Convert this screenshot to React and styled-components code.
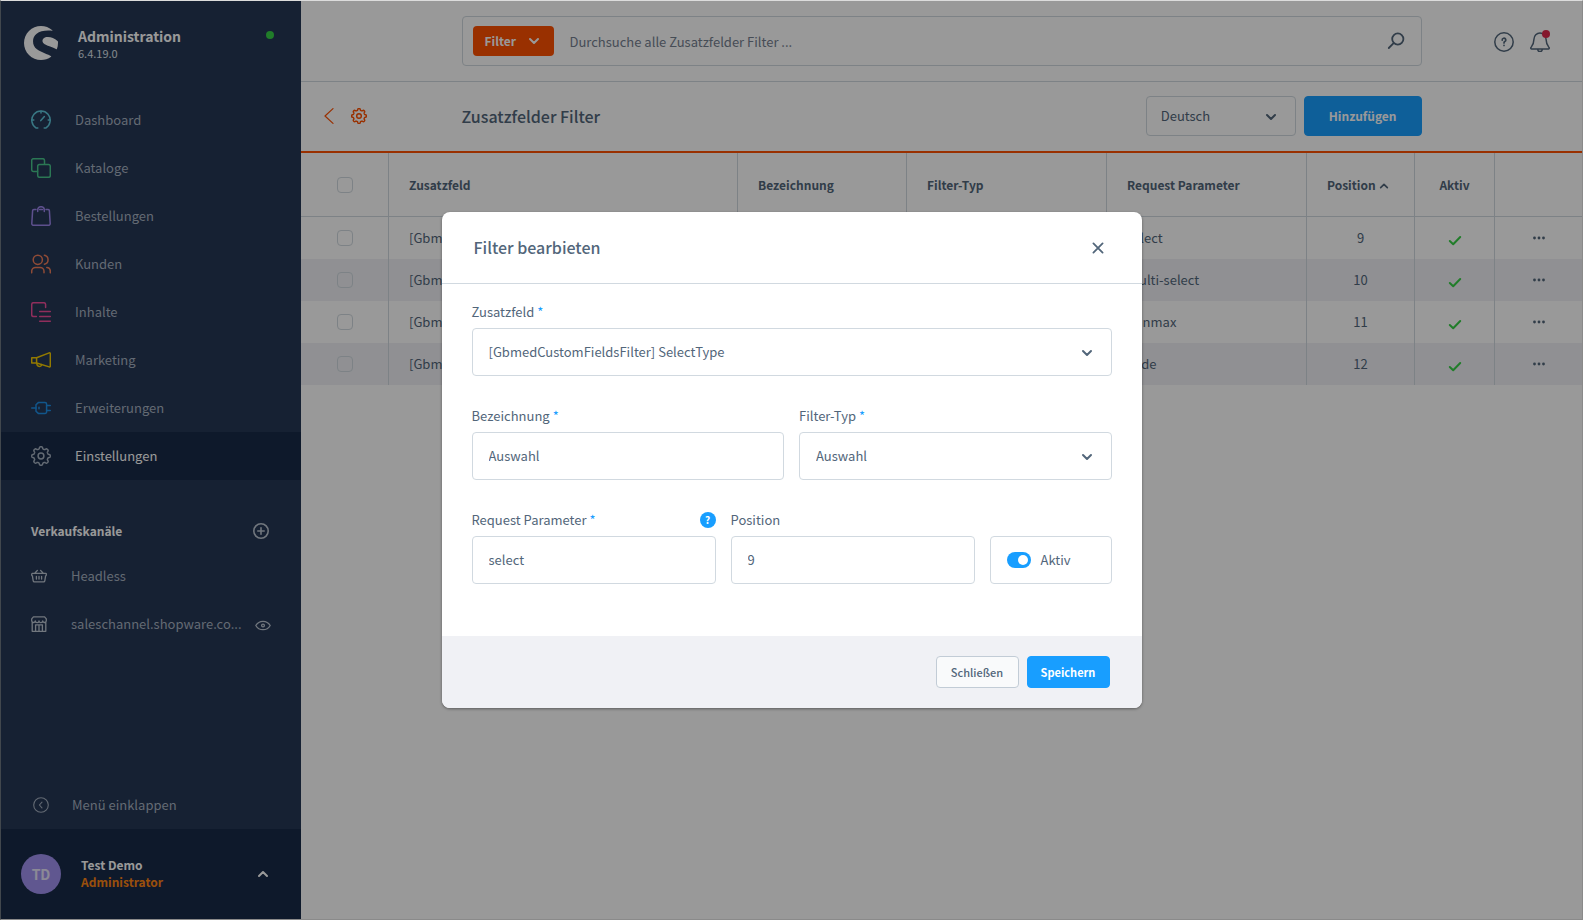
import React from "react"
import styled, { createGlobalStyle } from "styled-components"
import { SiShopware } from "react-icons/si"

const GlobalStyle = createGlobalStyle`
    *, *::before, *::after {
        box-sizing: border-box;
    }

    body {
        margin: 0;
        background: #fff;
    }

    body, button, input, select {
        font-family: "Noto Sans CJK SC", "Open Sans", sans-serif;
        font-size: 13px;
        line-height: 20px;
        color: #52667a;
    }

    button, input, select {
        margin: 0;
    }
`

const Window = styled.div`
    position: relative;
    display: flex;
    min-height: 100vh;
    border: 1px solid #8a8a8a;
    border-top-color: #dcdcdc;
    border-left-color: #41474d;
`

/* ---------- sidebar ---------- */

const Sidebar = styled.aside`
    flex: none;
    display: flex;
    flex-direction: column;
    width: 300px;
    background: #263755;
    color: #a5b1c0;
`

const Brand = styled.header`
    display: flex;
    align-items: flex-start;
    padding: 25px 27px 36px 23px;
`

const BrandText = styled.div`
    flex: 1;
    margin-left: 20px;
    color: #fff;

    strong {
        display: block;
        font-size: 14px;
    }

    span {
        display: block;
        font-size: 11px;
        line-height: 14px;
        color: #dde3ea;
    }
`

const OnlineDot = styled.span`
    width: 8px;
    height: 8px;
    margin-top: 5px;
    border-radius: 50%;
    background: #37d046;
`

const NavLink = styled.a`
    display: flex;
    align-items: center;
    gap: 24px;
    height: 48px;
    padding: 0 28px 0 30px;
    color: ${p => (p.$active ? "#fff" : "#a5b1c0")};
    background: ${p => (p.$active ? "#182a48" : "transparent")};
    text-decoration: none;

    svg {
        flex: none;
        color: ${p => p.$tint};
    }
`

const ChannelHead = styled.div`
    display: flex;
    align-items: center;
    justify-content: space-between;
    height: 42px;
    margin-top: 30px;
    padding: 0 32px 0 30px;
    color: #fff;
`

const SectionTitle = styled.h2`
    margin: 0;
    font-size: 12px;
    font-weight: 700;
`

const IconButton = styled.button`
    display: inline-flex;
    padding: 0;
    border: 0;
    background: none;
    color: ${p => p.$tint || "#52667a"};
    cursor: pointer;
`

const ChannelName = styled.span`
    flex: 1;
    white-space: nowrap;
`

const ChannelLink = styled(NavLink)`
    padding-right: 30px;

    svg:last-child:not(:first-child) {
        margin-left: -12px;
    }
`

const Collapse = styled.button`
    display: flex;
    align-items: center;
    gap: 23px;
    height: 48px;
    margin-top: auto;
    padding: 0 32px;
    border: 0;
    background: none;
    color: #a5b1c0;
    cursor: pointer;
`

const User = styled.button`
    display: flex;
    align-items: center;
    height: 90px;
    padding: 0 32px 0 20px;
    border: 0;
    background: #182a48;
    color: #fff;
    text-align: left;
    cursor: pointer;
`

const Avatar = styled.span`
    width: 40px;
    height: 40px;
    border-radius: 50%;
    background: #a092f0;
    color: #e8e4fb;
    font-size: 14px;
    font-weight: 700;
    line-height: 40px;
    text-align: center;
`

const UserText = styled.span`
    flex: 1;
    margin-left: 20px;
    padding-bottom: 2px;
    font-weight: 700;
    font-size: 12px;
    line-height: 17px;

    span {
        display: block;
    }

    span + span {
        color: #ff8514;
    }
`

/* ---------- page ---------- */

const Page = styled.main`
    flex: 1;
    min-width: 0;
`

const Bar = styled.div`
    display: grid;
    grid-template-columns: 1fr minmax(0, 960px) 1fr;
    align-items: center;
`

const TopBar = styled(Bar)`
    height: 81px;
    border-bottom: 1px solid #d1d9e0;
`

const TitleBar = styled(Bar)`
    height: 71px;
    padding-bottom: 2px;
    border-bottom: 2px solid #ff5000;
`

const Search = styled.form`
    grid-column: 2;
    display: flex;
    align-items: center;
    height: 50px;
    padding: 0 16px 0 10px;
    border: 1px solid #d1d9e0;
    border-radius: 4px;

    input {
        flex: 1;
        height: 30px;
        margin-left: 12px;
        padding: 0 4px;
        border: 0;
        outline: 0;
        background: none;

        &::placeholder {
            color: #758090;
            opacity: 1;
        }
    }
`

const FilterButton = styled.button`
    display: flex;
    align-items: center;
    justify-content: space-between;
    width: 81px;
    height: 30px;
    padding: 0 14px 0 12px;
    border: 0;
    border-radius: 4px;
    background: #ff5000;
    color: #fff;
    font-size: 12px;
    font-weight: 700;
`

const TopActions = styled.div`
    display: flex;
    justify-content: flex-end;
    gap: 16px;
    padding: 2px 32px 0 0;
`

const Bell = styled(IconButton)`
    position: relative;

    &::after {
        content: "";
        position: absolute;
        top: -2px;
        right: 0;
        width: 8px;
        height: 8px;
        border-radius: 50%;
        background: #de294c;
    }
`

const BackLinks = styled.div`
    display: flex;
    align-items: center;
    gap: 14px;
    padding-left: 20px;

    a {
        display: flex;
        color: #ff5000;
    }
`

const PageHead = styled.div`
    display: flex;
    align-items: center;
    gap: 8px;
`

const Title = styled.h1`
    flex: 1;
    margin: 0;
    font-size: 16px;
    font-weight: 500;
`

const SelectBox = styled.div`
    position: relative;
    width: ${p => p.$width || "100%"};

    select {
        appearance: none;
        display: block;
        width: 100%;
        height: ${p => p.$height || "48px"};
        padding: 0 40px 0 ${p => p.$inset || "16px"};
        border: 1px solid #d1d9e0;
        border-radius: 4px;
        background: none;
    }

    svg {
        position: absolute;
        top: 50%;
        right: 19px;
        margin-top: -5px;
        pointer-events: none;
    }
`

const PrimaryButton = styled.button`
    height: ${p => (p.$small ? "32px" : "40px")};
    min-width: 83px;
    padding: ${p => (p.$small ? "0 12px" : "0 24px")};
    border: 1px solid #189eff;
    border-radius: 4px;
    background: #189eff;
    color: #fff;
    font-size: ${p => (p.$small ? "11px" : "12px")};
    font-weight: 700;
`

const PlainButton = styled(PrimaryButton)`
    border-color: #c2ccd6;
    background: #f9fafb;
    color: #52667a;
    font-weight: 500;
`

/* ---------- data table ---------- */

const Grid = styled.table`
    width: 100%;
    border-collapse: separate;
    border-spacing: 0;
    table-layout: fixed;

    th, td {
        padding: 0 20px;
        border-right: 1px solid #d1d9e0;
        text-align: left;
        white-space: nowrap;
        overflow: hidden;
    }

    th:last-child, td:last-child {
        border-right: 0;
    }

    th {
        height: 64px;
        border-bottom: 1px solid #d1d9e0;
        font-weight: 700;
        font-size: 12px;
    }

    td {
        height: 42px;
    }

    tbody tr:nth-child(even) td {
        background: #f0f1f5;
    }

    .center {
        padding: 0;
        text-align: center;
    }

    th svg {
        margin-left: 1px;
        vertical-align: -1px;
    }
`

const ActiveMark = styled.span`
    display: flex;
    justify-content: center;
    padding-top: 3px;
    color: #37d046;
`

const RowMenu = styled(IconButton)`
    display: flex;
    margin: 0 auto;
`

const Check = styled.input`
    appearance: none;
    display: block;
    width: 16px;
    height: 16px;
    margin: 0 auto;
    border: 1px solid #d1d9e0;
    border-radius: 4px;
`

/* ---------- modal ---------- */

const Overlay = styled.div`
    position: absolute;
    inset: 0;
    display: flex;
    align-items: center;
    justify-content: center;
    background: rgba(0, 0, 0, 0.4);
`

const Modal = styled.section`
    width: 700px;
    max-width: 100%;
    border-radius: 8px;
    background: #fff;
    box-shadow: 0 1px 3px rgba(0, 0, 0, 0.4);
    overflow: hidden;
`

const ModalHead = styled.header`
    display: flex;
    align-items: center;
    justify-content: space-between;
    height: 72px;
    padding: 0 36px 0 32px;
    border-bottom: 1px solid #d1d9e0;

    h2 {
        margin: 0;
        padding-bottom: 2px;
        font-size: 16px;
        font-weight: 500;
    }
`

const ModalBody = styled.div`
    padding: 20px 30px;
`

const FieldRow = styled.div`
    display: grid;
    grid-template-columns: ${p => p.$columns || "1fr"};
    align-items: end;
    gap: 15px;
    margin-bottom: 32px;
`

const FieldLabel = styled.div`
    display: flex;
    align-items: center;
    justify-content: space-between;
    height: 16px;
    margin-bottom: 8px;

    sup {
        margin-left: 3px;
        line-height: 0;
        font-size: 13px;
        vertical-align: 0;
        color: #189eff;
    }
`

const TextInput = styled.input`
    display: block;
    width: 100%;
    height: 48px;
    padding: 0 16px 2px;
    border: 1px solid #d1d9e0;
    border-radius: 4px;
    outline: 0;
`

const SwitchField = styled.label`
    display: flex;
    align-items: center;
    gap: 10px;
    height: 48px;
    padding: 0 16px;
    border: 1px solid #d1d9e0;
    border-radius: 4px;

    input {
        appearance: none;
        width: 24px;
        height: 16px;
        padding: 3px;
        border-radius: 8px;
        background: #d1d9e0;
    }

    input::before {
        content: "";
        display: block;
        width: 10px;
        height: 10px;
        border-radius: 50%;
        background: #fff;
    }

    input:checked {
        background: #189eff;
    }

    input:checked::before {
        margin-left: 8px;
    }
`

const HelpBadge = styled.button`
    width: 16px;
    height: 16px;
    padding: 0;
    border: 0;
    border-radius: 50%;
    background: #189eff;
    color: #fff;
    font-size: 10px;
    font-weight: 700;
    line-height: 16px;
`

const ModalFoot = styled.footer`
    display: flex;
    align-items: center;
    justify-content: flex-end;
    gap: 8px;
    height: 72px;
    padding: 0 32px;
    background: #f0f1f5;
`

/* ---------- icons ---------- */

const Icon = ({ size = 20, box = 20, width = 1.5, children }) => (
    <svg
        width={size}
        height={size}
        viewBox={`0 0 ${box} ${box}`}
        fill="none"
        stroke="currentColor"
        strokeWidth={width}
        strokeLinecap="round"
        strokeLinejoin="round"
        aria-hidden="true"
    >
        {children}
    </svg>
)

// eight rounded teeth around the hub, one of them pointing straight up
const gearPath = () => {
    const points = []
    for (let i = 0; i < 160; i++) {
        const angle = (i / 160) * Math.PI * 2
        const radius = 8.2 + 1.05 * Math.tanh(2.2 * Math.cos(8 * angle))
        points.push(`${(10 + radius * Math.sin(angle)).toFixed(2)} ${(10 - radius * Math.cos(angle)).toFixed(2)}`)
    }
    return `M${points.join(" L")} Z`
}

const GEAR = gearPath()

const Gear = ({ size, width }) => (
    <Icon size={size} width={width}>
        <path d={GEAR} />
        <circle cx="10" cy="10" r="2.9" />
    </Icon>
)

const Chevron = ({ up, size = 12, width = 2 }) => (
    <Icon size={size} box={12} width={width}>
        <path d={up ? "M2 8 L6 4 L10 8" : "M2 4 L6 8 L10 4"} />
    </Icon>
)

const navItems = [
    {
        label: "Dashboard",
        tint: "#5fc8dd",
        icon: (
            <Icon>
                <path d="M6.8 18.1 H5.2 A9.2 9.2 0 1 1 14.8 18.1 H13.2" />
                <path d="M10 1.2 V3 M.8 10 H2.8 M17.2 10 H19.2 M9.8 10.6 L13.4 6.6" />
            </Icon>
        ),
    },
    {
        label: "Kataloge",
        tint: "#48c78d",
        icon: (
            <Icon>
                <path d="M6.5 13.5 H2.5 A1.8 1.8 0 0 1 .7 11.7 V2.5 A1.8 1.8 0 0 1 2.5 .7 H11.7 A1.8 1.8 0 0 1 13.5 2.5 V6.3" />
                <rect x="6.7" y="6.5" width="12.6" height="12.8" rx="1.8" />
            </Icon>
        ),
    },
    {
        label: "Bestellungen",
        tint: "#9c86ec",
        icon: (
            <Icon>
                <path d="M5 3.6 H2.9 A1.3 1.3 0 0 0 1.6 4.9 L.8 17.6 A1.6 1.6 0 0 0 2.4 19.3 H17.6 A1.6 1.6 0 0 0 19.2 17.6 L18.4 4.9 A1.3 1.3 0 0 0 17.1 3.6 H15 M8.5 3.6 H11.5" />
                <path d="M6.7 5.4 V3.8 A3.3 3.1 0 0 1 13.3 3.8 V5.4" />
            </Icon>
        ),
    },
    {
        label: "Kunden",
        tint: "#ef7d5a",
        icon: (
            <Icon>
                <circle cx="6.8" cy="5.8" r="4.6" />
                <path d="M13.4 1.2 A4.6 4.6 0 0 1 13.4 10.2 M.7 18.8 V17.2 A3.8 3.8 0 0 1 4.5 13.4 H9.2 A3.8 3.8 0 0 1 13 17.2 V18.8 M15.8 13.4 A3.8 3.8 0 0 1 19.3 17.2 V18.8" />
            </Icon>
        ),
    },
    {
        label: "Inhalte",
        tint: "#f04e9a",
        icon: (
            <Icon>
                <path d="M5.4 14.6 H2.6 A1.9 1.9 0 0 1 .7 12.7 V2.6 A1.9 1.9 0 0 1 2.6 .7 H12.7 A1.9 1.9 0 0 1 14.6 2.6 V5.6" />
                <path d="M8.7 9.4 H19.3 M8.7 14.4 H19.3 M8.7 19.2 H19.3" />
            </Icon>
        ),
    },
    {
        label: "Marketing",
        tint: "#f5cc00",
        icon: (
            <Icon>
                <path d="M.7 7.8 H5.6 L18.2 2.9 A.8 .8 0 0 1 19.3 3.6 V16.2 A.8 .8 0 0 1 18.2 16.9 L5.6 13 H.7 Z M5.6 7.8 V13 M6 13.2 A2.5 2.5 0 1 0 10.8 14.6" />
            </Icon>
        ),
    },
    {
        label: "Erweiterungen",
        tint: "#1d8fe8",
        icon: (
            <Icon>
                <path d="M.7 10 H5 M15.6 7.5 H19.3 M15.6 12.5 H19.3 M8 9.2 V10.8" />
                <path d="M7.3 4.6 H14 A1.6 1.6 0 0 1 15.6 6.2 V13.8 A1.6 1.6 0 0 1 14 15.4 H7.3 L5 13.2 V6.8 Z" />
            </Icon>
        ),
    },
    { label: "Einstellungen", tint: "#a5b1c0", icon: <Gear />, active: true },
]

const rows = [
    { field: "[GbmedCustomFieldsFilter] SelectType", name: "Auswahl", type: "Auswahl", param: "select", position: 9 },
    { field: "[GbmedCustomFieldsFilter] MultiSelect", name: "Mehrfachauswahl", type: "Mehrfachauswahl", param: "multi-select", position: 10 },
    { field: "[GbmedCustomFieldsFilter] MinMax", name: "Min / Max", type: "Min / Max", param: "minmax", position: 11 },
    { field: "[GbmedCustomFieldsFilter] Code", name: "Code", type: "Auswahl", param: "code", position: 12 },
]

const Menu = () => (
    <Sidebar>
        <Brand>
            <SiShopware size={34} color="#fff" aria-hidden="true" />
            <BrandText>
                <strong>Administration</strong>
                <span>6.4.19.0</span>
            </BrandText>
            <OnlineDot />
        </Brand>
        <nav>
            {navItems.map(item => (
                <NavLink key={item.label} href="#" $tint={item.tint} $active={item.active}>
                    {item.icon}
                    {item.label}
                </NavLink>
            ))}
        </nav>
        <ChannelHead>
            <SectionTitle>Verkaufskanäle</SectionTitle>
            <IconButton $tint="#bcc6d2" aria-label="Verkaufskanal hinzufügen">
                <Icon size={16} box={16} width={1.6}>
                    <circle cx="8" cy="8" r="7.2" />
                    <path d="M8 4.8 V11.2 M4.8 8 H11.2" />
                </Icon>
            </IconButton>
        </ChannelHead>
        <ChannelLink href="#" $tint="#bcc6d2">
            <Icon size={16} box={16} width={1.3}>
                <path d="M1.2 5.4 H14.8 A.6 .6 0 0 1 15.3 6.2 V7 A.8 .8 0 0 1 14.6 7.8 L13.8 12.8 A1.2 1.2 0 0 1 12.6 13.8 H3.4 A1.2 1.2 0 0 1 2.2 12.8 L1.4 7.8 A.8 .8 0 0 1 .7 7 V6.2 Z M4 5 L6.4 2.4 M12 5 L9.6 2.4 M5.4 8.4 V11 M8 8.4 V11 M10.6 8.4 V11" />
            </Icon>
            <ChannelName>Headless</ChannelName>
        </ChannelLink>
        <ChannelLink href="#" $tint="#bcc6d2">
            <Icon size={16} box={16} width={1.3}>
                <path d="M2.4 .8 H13.6 L15.3 2.8 V4.6 A1.8 1.8 0 0 1 11.7 4.8 A1.8 1.8 0 0 1 8 4.8 A1.8 1.8 0 0 1 4.3 4.8 A1.8 1.8 0 0 1 .7 4.6 V2.8 Z M1.2 6.6 V15.3 H14.8 V6.6 M4.6 15 V8.8 H11.4 V15 M8 8.8 V15" />
            </Icon>
            <ChannelName>saleschannel.shopware.co...</ChannelName>
            <Icon size={16} box={16} width={1.3}>
                <path d="M.8 9.5 C4 3.9 12 3.9 15.2 9.5 C12 15.1 4 15.1 .8 9.5 Z" />
                <circle cx="8" cy="9.5" r="1.4" />
            </Icon>
        </ChannelLink>
        <Collapse>
            <Icon size={16} box={16} width={1.1}>
                <circle cx="8" cy="8" r="7.3" />
                <path d="M9 5.2 L6.4 8 L9 10.8" />
            </Icon>
            Menü einklappen
        </Collapse>
        <User>
            <Avatar>TD</Avatar>
            <UserText>
                <span>Test Demo</span>
                <span>Administrator</span>
            </UserText>
            <Chevron up />
        </User>
    </Sidebar>
)

const FilterTable = () => (
    <Grid>
        <colgroup>
            <col width="88" />
            <col />
            <col width="169" />
            <col width="200" />
            <col width="200" />
            <col width="108" />
            <col width="80" />
            <col width="87" />
        </colgroup>
        <thead>
            <tr>
                <th className="center"><Check type="checkbox" aria-label="Alle auswählen" /></th>
                <th>Zusatzfeld</th>
                <th>Bezeichnung</th>
                <th>Filter-Typ</th>
                <th>Request Parameter</th>
                <th>Position <Chevron up size={10} /></th>
                <th className="center">Aktiv</th>
                <th />
            </tr>
        </thead>
        <tbody>
            {rows.map(row => (
                <tr key={row.param}>
                    <td className="center"><Check type="checkbox" aria-label={row.param} /></td>
                    <td>{row.field}</td>
                    <td>{row.name}</td>
                    <td>{row.type}</td>
                    <td>{row.param}</td>
                    <td className="center">{row.position}</td>
                    <td className="center">
                        <ActiveMark>
                            <Icon size={14} box={14} width={2}>
                                <path d="M1.8 8 L5.2 11.2 L12.2 4" />
                            </Icon>
                        </ActiveMark>
                    </td>
                    <td className="center">
                        <RowMenu aria-label="Aktionen">
                            <svg width="12" height="4" viewBox="0 0 12 4" fill="currentColor">
                                <circle cx="1.5" cy="2" r="1.4" />
                                <circle cx="6" cy="2" r="1.4" />
                                <circle cx="10.5" cy="2" r="1.4" />
                            </svg>
                        </RowMenu>
                    </td>
                </tr>
            ))}
        </tbody>
    </Grid>
)

const Label = ({ id, text, required, children }) => (
    <FieldLabel>
        <label htmlFor={id}>
            {text}
            {required && <sup>*</sup>}
        </label>
        {children}
    </FieldLabel>
)

const SelectField = ({ id, text, value }) => (
    <div>
        <Label id={id} text={text} required />
        <SelectBox>
            <select id={id} defaultValue={value}>
                <option>{value}</option>
            </select>
            <Chevron />
        </SelectBox>
    </div>
)

const EditModal = () => (
    <Overlay>
        <Modal role="dialog" aria-labelledby="modal-title">
            <ModalHead>
                <h2 id="modal-title">Filter bearbieten</h2>
                <IconButton aria-label="Schließen">
                    <Icon size={16} box={16} width={1.8}>
                        <path d="M3.4 3.4 L12.6 12.6 M12.6 3.4 L3.4 12.6" />
                    </Icon>
                </IconButton>
            </ModalHead>
            <ModalBody>
                <FieldRow>
                    <SelectField id="field" text="Zusatzfeld" value="[GbmedCustomFieldsFilter] SelectType" />
                </FieldRow>
                <FieldRow $columns="1fr 1fr">
                    <div>
                        <Label id="name" text="Bezeichnung" required />
                        <TextInput id="name" defaultValue="Auswahl" />
                    </div>
                    <SelectField id="type" text="Filter-Typ" value="Auswahl" />
                </FieldRow>
                <FieldRow $columns="2fr 2fr 1fr">
                    <div>
                        <Label id="param" text="Request Parameter" required>
                            <HelpBadge aria-label="Hilfe">?</HelpBadge>
                        </Label>
                        <TextInput id="param" defaultValue="select" />
                    </div>
                    <div>
                        <Label id="position" text="Position" />
                        <TextInput id="position" defaultValue="9" />
                    </div>
                    <SwitchField>
                        <input type="checkbox" defaultChecked />
                        Aktiv
                    </SwitchField>
                </FieldRow>
            </ModalBody>
            <ModalFoot>
                <PlainButton $small>Schließen</PlainButton>
                <PrimaryButton $small>Speichern</PrimaryButton>
            </ModalFoot>
        </Modal>
    </Overlay>
)

const App = () => (
    <Window>
        <GlobalStyle />
        <Menu />
        <Page>
            <TopBar>
                <Search>
                    <FilterButton type="button">
                        Filter
                        <Chevron />
                    </FilterButton>
                    <input aria-label="Suche" placeholder="Durchsuche alle Zusatzfelder Filter ..." />
                    <IconButton aria-label="Suchen">
                        <Icon size={18} box={18} width={1.8}>
                            <circle cx="10.8" cy="7" r="5.6" />
                            <path d="M6.6 11.2 L1.8 16" />
                        </Icon>
                    </IconButton>
                </Search>
                <TopActions>
                    <IconButton aria-label="Hilfe">
                        <Icon>
                            <circle cx="10" cy="10" r="9.2" />
                            <path d="M8.2 8.2 A1.8 1.8 0 1 1 10.8 9.6 Q10 10 10 11 M10 13.4 V13.5" strokeWidth="1.7" />
                        </Icon>
                    </IconButton>
                    <Bell aria-label="Benachrichtigungen">
                        <Icon>
                            <path d="M1.6 17 A.9 .9 0 0 1 .9 15.6 C2.6 13.6 3.8 12.4 4 7 A6 6 0 0 1 16 7 C16.2 12.4 17.4 13.6 19.1 15.6 A.9 .9 0 0 1 18.4 17 Z M7.8 17.4 A2.2 2.2 0 0 0 12.2 17.4" />
                        </Icon>
                    </Bell>
                </TopActions>
            </TopBar>
            <TitleBar>
                <BackLinks>
                    <a href="#" aria-label="Zurück">
                        <Icon size={16} box={16} width={1.2}>
                            <path d="M12 .6 L4 8 L12 15.4" />
                        </Icon>
                    </a>
                    <a href="#" aria-label="Einstellungen"><Gear size={16} width={1.8} /></a>
                </BackLinks>
                <PageHead>
                    <Title>Zusatzfelder Filter</Title>
                    <SelectBox $width="150px" $height="40px" $inset="14px">
                        <select aria-label="Sprache" defaultValue="Deutsch">
                            <option>Deutsch</option>
                        </select>
                        <Chevron />
                    </SelectBox>
                    <PrimaryButton>Hinzufügen</PrimaryButton>
                </PageHead>
            </TitleBar>
            <FilterTable />
        </Page>
        <EditModal />
    </Window>
)

export default App
